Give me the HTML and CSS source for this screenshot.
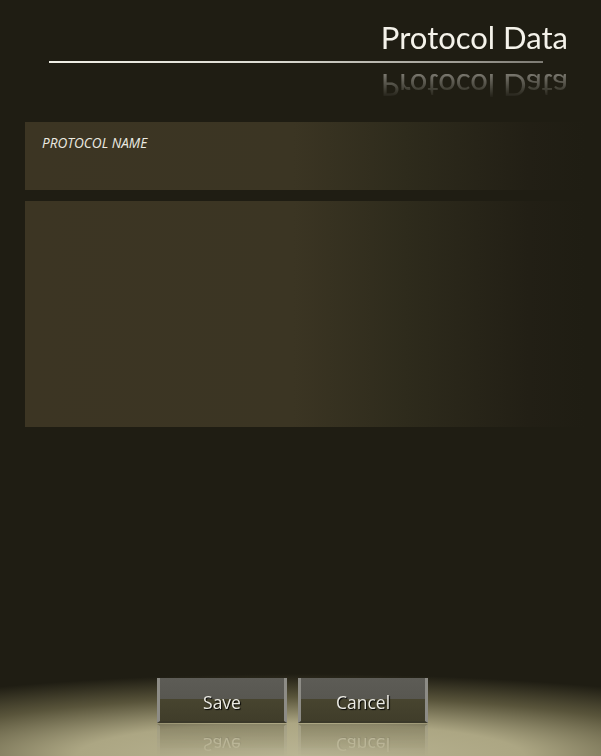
FILE: index.html
```html
<!DOCTYPE html>
<html lang="en">
<head>
<meta charset="utf-8">
<title>Protocol Data</title>
<link rel="stylesheet" href="styles.css">
</head>
<body>
<div class="screen">
  <header class="header">
    <h1 class="title">Protocol Data</h1>
    <div class="rule"></div>
  </header>
  <main class="panels">
    <section class="panel panel-name">
      <span class="label">PROTOCOL NAME</span>
    </section>
    <section class="panel panel-body"></section>
  </main>
  <footer class="actions">
    <button class="btn" type="button">Save</button>
    <button class="btn" type="button">Cancel</button>
  </footer>
</div>
</body>
</html>
```

FILE: styles.css
```css
html, body {
  margin: 0;
  padding: 0;
  background: #1f1d13;
}

.screen {
  position: relative;
  width: 601px;
  height: 756px;
  overflow: hidden;
  display: flex;
  flex-direction: column;
  background:
    radial-gradient(ellipse 560px 82px at 50% 100%, #bab594 0%, #aca683 40%, rgba(120,114,80,0.65) 72%, rgba(31,29,19,0) 100%),
    #1f1d13;
  font-family: "Open Sans", "Liberation Sans", sans-serif;
}

.header {
  position: relative;
  padding: 19px 33px 0 49px;
  height: 102px;
  box-sizing: border-box;
}

.title {
  margin: 0;
  font-family: Lato, "Open Sans", sans-serif;
  font-weight: 400;
  font-size: 31px;
  line-height: 37px;
  color: #f4f2ea;
  text-align: right;
  -webkit-box-reflect: below 11px linear-gradient(to bottom, transparent 15%, rgba(255,255,255,0.55));
}

.rule {
  position: absolute;
  left: 49px;
  top: 61px;
  width: 494px;
  height: 2px;
  background: linear-gradient(to right, #f0efe6 0%, #dcdbd2 45%, #9a9890 85%, #7c7a72 100%);
}

.panels {
  display: flex;
  flex-direction: column;
  gap: 11px;
  padding: 20px 0 0 25px;
}

.panel {
  width: 560px;
  box-sizing: border-box;
  background: linear-gradient(to right, #3c3523 0%, #3b3523 48%, #2e2b1c 68%, #221f15 90%, #1f1d13 100%);
}

.panel-name {
  height: 68px;
  padding: 12px 17px;
}

.panel-body {
  height: 226px;
}

.label {
  display: block;
  font-family: "Open Sans", "Liberation Sans", sans-serif;
  font-style: italic;
  font-size: 13.6px;
  line-height: 18px;
  color: #ecebe2;
}

.actions {
  position: absolute;
  left: 157px;
  top: 678px;
  display: flex;
  gap: 11px;
}

.btn {
  width: 130px;
  height: 45px;
  margin: 0;
  padding: 4px 0 0;
  border: none;
  border-left: 3px solid #8d8c86;
  border-right: 3px solid #8d8c86;
  border-bottom: 2px solid #3a3829;
  box-sizing: border-box;
  background: linear-gradient(to bottom, #5d5c56 0%, #585751 48%, #47442f 50%, #403d2a 100%);
  color: #ecebe4;
  font-family: "Open Sans", "Liberation Sans", sans-serif;
  font-size: 17.5px;
  line-height: 20px;
  text-shadow: 1px 1px 1px #000;
  -webkit-box-reflect: below 1px linear-gradient(to bottom, transparent 25%, rgba(255,255,255,0.3));
}
```
